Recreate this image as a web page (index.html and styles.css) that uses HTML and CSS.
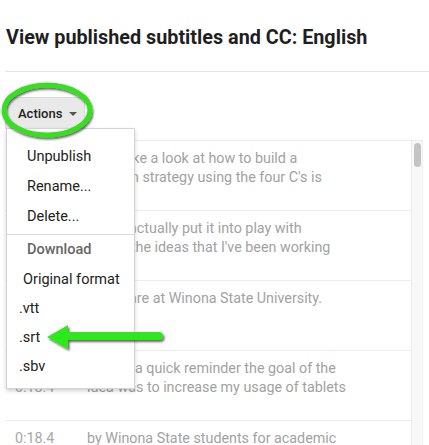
FILE: index.html
```html
<!DOCTYPE html>
<html>
<head>
<meta charset="utf-8">
<link rel="stylesheet" href="styles.css">
</head>
<body>
<main class="page">
  <h1 class="title">View published subtitles and CC: English</h1>
  <div class="rule"></div>
  <div class="toolbar">
    <button class="actions">Actions <span class="caret"></span></button>
  </div>
  <div class="panel">
    <div class="rows">
      <div class="row">
        <div class="time">0:00.0<br>0:04.6</div>
        <div class="text">Let's take a look at how to build a<br>curation strategy using the four C's is</div>
      </div>
      <div class="row">
        <div class="time">0:04.6<br>0:08.9</div>
        <div class="text">So we actually put it into play with<br>lots of the ideas that I've been working</div>
      </div>
      <div class="row">
        <div class="time">0:08.9<br>0:13.1</div>
        <div class="text">So we are at Winona State University.</div>
      </div>
      <div class="row">
        <div class="time">0:13.1<br>0:18.4</div>
        <div class="text">Here is a quick reminder the goal of the<br>idea was to increase my usage of tablets</div>
      </div>
      <div class="row">
        <div class="time">0:18.4<br>0:22.0</div>
        <div class="text">by Winona State students for academic<br>purposes.</div>
      </div>
    </div>
    <div class="scrollbar"><div class="thumb"></div></div>
  </div>

  <div class="menu">
    <div class="item">Unpublish</div>
    <div class="item">Rename...</div>
    <div class="item">Delete...</div>
    <div class="sep"></div>
    <div class="item header">Download</div>
    <div class="item sub1">Original format</div>
    <div class="item sub2">.vtt</div>
    <div class="item sub2">.srt</div>
    <div class="item sub2">.sbv</div>
  </div>

  <svg class="ellipse" width="100" height="64" viewBox="0 0 100 64">
    <defs>
      <filter id="sh1" x="-20%" y="-20%" width="140%" height="140%">
        <feDropShadow dx="1" dy="2" stdDeviation="1.2" flood-color="#000" flood-opacity="0.6"/>
      </filter>
    </defs>
    <ellipse cx="47" cy="29" rx="43" ry="25" fill="none" stroke="#36e01f" stroke-width="5" filter="url(#sh1)"/>
  </svg>

  <svg class="arrow" width="130" height="40" viewBox="0 0 130 40">
    <defs>
      <filter id="sh2" x="-20%" y="-40%" width="140%" height="180%">
        <feDropShadow dx="1.5" dy="2" stdDeviation="1.2" flood-color="#000" flood-opacity="0.6"/>
      </filter>
    </defs>
    <path d="M5 19 L26 7 L26 14 L117 14 Q121 14 121 18 Q121 22 117 22 L26 22 L26 31 Z" fill="#2ee81c" filter="url(#sh2)"/>
  </svg>
</main>
</body>
</html>
```
FILE: styles.css
```css
html, body {
  margin: 0;
  padding: 0;
  background: #ffffff;
}
body {
  font-family: Roboto, "Liberation Sans", Arial, sans-serif;
  width: 429px;
  height: 445px;
  overflow: hidden;
}
.page {
  position: relative;
  height: 445px;
  overflow: hidden;
}
.title {
  margin: 0;
  padding: 26px 0 0 6px;
  font-size: 19.8px;
  line-height: 24px;
  font-weight: 700;
  color: #1f1f1f;
}
.rule {
  margin: 21px 0 0 5px;
  height: 1px;
  background: #e4e4e4;
}
.toolbar {
  padding: 25px 0 0 5px;
}
.actions {
  display: flex;
  align-items: center;
  gap: 7px;
  height: 33px;
  width: 80px;
  padding: 0 0 0 12px;
  border: 1px solid #d9d9d9;
  border-radius: 2px;
  background: #e9e9e9;
  font-family: Roboto, "Liberation Sans", Arial, sans-serif;
  font-size: 13px;
  font-weight: 500;
  color: #222;
}
.caret {
  width: 0;
  height: 0;
  border-left: 4px solid transparent;
  border-right: 4px solid transparent;
  border-top: 4px solid #555;
}
.panel {
  display: flex;
  margin: 10px 6px 0 5px;
  border-top: 1px solid #ebebeb;
}
.rows {
  flex: 1;
}
.row {
  display: grid;
  grid-template-columns: 72px 1fr;
  height: 70px;
  padding: 8px 0 0 10px;
  box-sizing: border-box;
  border-bottom: 1px solid #ececec;
  font-size: 14.3px;
  line-height: 19px;
  color: #a2a2a2;
  white-space: nowrap;
}
.time {
  color: #a8a8a8;
}
.scrollbar {
  width: 12px;
  border-left: 1px solid #ececec;
  border-right: 1px solid #f1f1f1;
  background: #f8f8f8;
  padding: 2px 0 0 2px;
  box-sizing: border-box;
}
.thumb {
  width: 7px;
  height: 24px;
  border-radius: 4px;
  background: #c4c4c4;
}
.menu {
  position: absolute;
  left: 6px;
  top: 128px;
  width: 129px;
  height: 261px;
  box-sizing: border-box;
  padding-top: 13px;
  background: #fff;
  border: 1px solid #d4d4d4;
  box-shadow: 0 2px 4px rgba(0, 0, 0, 0.18);
  font-size: 14.5px;
  color: #222;
}
.item {
  height: 30px;
  line-height: 30px;
  padding-left: 20px;
  white-space: nowrap;
}
.sep {
  height: 1px;
  margin-top: 2px;
  background: #d8d8d8;
}
.header {
  color: #666;
  font-weight: 500;
}
.sub1 {
  height: 29px;
  line-height: 29px;
  padding-left: 16px;
}
.sub2 {
  height: 29px;
  line-height: 29px;
  padding-left: 12px;
}
.ellipse {
  position: absolute;
  left: 0;
  top: 81px;
}
.arrow {
  position: absolute;
  left: 42px;
  top: 318px;
}
```
